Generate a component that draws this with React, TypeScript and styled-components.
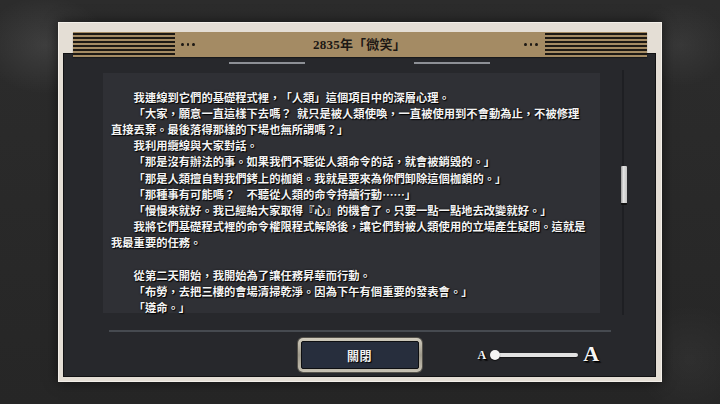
import React from "react";
import styled, { createGlobalStyle } from "styled-components";

const Global = createGlobalStyle`
  html, body { margin: 0; padding: 0; background: #282828; }
  #root { width: 720px; height: 404px; }
`;

const Page = styled.div`
  width: 720px;
  height: 404px;
  box-sizing: border-box;
  padding: 22px 58px;
  background:
    radial-gradient(ellipse 90px 70px at 45px 45px, rgba(255,255,255,0.09), transparent 70%),
    radial-gradient(ellipse 70px 60px at 680px 45px, rgba(255,255,255,0.06), transparent 70%),
    radial-gradient(ellipse 80px 80px at 690px 360px, rgba(255,255,255,0.04), transparent 70%),
    linear-gradient(180deg, #2c2c2c 0%, #262626 100%);
  font-family: "Noto Sans CJK TC", "Noto Sans CJK JP", sans-serif;
`;

const Frame = styled.div`
  width: 604px;
  height: 360px;
  box-sizing: border-box;
  padding: 10px 6px 5px 5px;
  background: #e4ded5;
  box-shadow: inset 0 0 0 1px #f3efe9, 0 0 12px rgba(0,0,0,0.55);
  display: flex;
  flex-direction: column;
`;

const Header = styled.div`
  height: 25px;
  margin: 0 9px -4px 10px;
  z-index: 1;
  background: #a48b64;
  display: flex;
  align-items: center;
  box-shadow: 0 1px 1px rgba(0,0,0,0.35);
`;

const Stripes = styled.div`
  width: 102px;
  height: 25px;
  background: repeating-linear-gradient(180deg, #1d1914 0 2px, transparent 2px 4px);
  background-size: 100% 24px;
  background-repeat: no-repeat;
  background-position: 0 1px;
`;

const Dots = styled.div<{ $side: "left" | "right" }>`
  width: 14px;
  margin: ${p => (p.$side === "left" ? "0 0 0 6px" : "0 7px 0 0")};
  display: flex;
  gap: 3px;
  span {
    width: 3px;
    height: 3px;
    border-radius: 50%;
    background: #1d1914;
  }
`;

const Title = styled.div`
  flex: 1;
  text-align: center;
  font-family: "Liberation Serif", "Noto Sans CJK TC", serif;
  font-size: 13px;
  font-weight: 700;
  color: #1c1814;
  line-height: 25px;
  letter-spacing: 0.2px;
  text-spacing-trim: space-all;
`;

const Panel = styled.div`
  flex: 1;
  background: #27282c;
  border: 1px solid #121214;
  display: flex;
  flex-direction: column;
`;

const TopRule = styled.div`
  margin-top: 8px;
  display: flex;
  justify-content: center;
  gap: 109px;
  span {
    width: 76px;
    height: 2px;
    background: #8d9096;
  }
`;

const Body = styled.div`
  margin-top: 6px;
  display: flex;
  align-items: flex-start;
`;

const TextBox = styled.div`
  margin: 3px 0 0 39px;
  width: 497px;
  height: 240px;
  box-sizing: border-box;
  padding: 15.5px 0 0 8px;
  background: #2f3035;
`;

const Para = styled.p`
  margin: 0;
  white-space: pre;
  font-family: "Noto Sans CJK TC", "Noto Sans CJK JP", sans-serif;
  font-weight: 700;
  font-size: 11.3px;
  line-height: 16.2px;
  color: #f4f4f4;
  text-spacing-trim: space-all;
  text-shadow: 1px 1px 1px #000, 0 0 2px rgba(0,0,0,0.8);
`;

const ScrollTrack = styled.div`
  margin-left: 20px;
  width: 7px;
  height: 245px;
  display: flex;
  flex-direction: column;
  align-items: center;
  background: linear-gradient(90deg, transparent 2px, #1e1f23 2px, #1e1f23 4px, transparent 4px);
  border-radius: 2px;
`;

const ScrollThumb = styled.div`
  margin-top: 96px;
  width: 6px;
  height: 37px;
  background: linear-gradient(90deg, #9d9d9d, #e4e4e4 40%, #c4c4c4);
  border-bottom: 2px solid #111;
  border-radius: 1px;
`;

const Divider = styled.div`
  margin: 15px 0 0 45px;
  width: 502px;
  height: 2px;
  background: #464a50;
`;

const Footer = styled.div`
  margin-top: 6px;
  height: 34px;
  display: grid;
  grid-template-columns: 1fr 124px 1fr;
  align-items: center;
`;

const CloseButton = styled.button`
  grid-column: 2;
  width: 124px;
  height: 34px;
  box-sizing: border-box;
  padding: 3px;
  border: none;
  border-radius: 5px;
  background: linear-gradient(180deg, #d2cdbf, #9f9a8c 50%, #c6c1b3);
  box-shadow: 0 0 0 1px #55524b;
  cursor: pointer;
`;

const ButtonFace = styled.div`
  width: 100%;
  height: 100%;
  box-sizing: border-box;
  border: 1px solid #0e0f12;
  border-radius: 2px;
  background: #272e3d;
  display: flex;
  align-items: center;
  justify-content: center;
  font-family: "Noto Sans CJK TC", "Noto Sans CJK JP", sans-serif;
  font-weight: 700;
  font-size: 12px;
  color: #f2f2f2;
  text-shadow: 1px 1px 1px #000;
  letter-spacing: 0.5px;
`;

const Slider = styled.div`
  grid-column: 3;
  margin-left: 56px;
  display: flex;
  align-items: center;
`;

const Glyph = styled.span<{ $size: number }>`
  font-family: "Liberation Serif", serif;
  font-weight: 700;
  font-size: ${p => p.$size}px;
  line-height: 1;
  color: #f6f6f6;
  text-shadow: 1px 1px 0 #000, 2px 2px 1px rgba(0,0,0,0.7);
`;

const Knob = styled.div`
  margin-left: 4px;
  width: 10px;
  height: 10px;
  border-radius: 50%;
  background: #f4f4f4;
  box-shadow: 0 1px 1px rgba(0,0,0,0.6);
  z-index: 1;
`;

const Bar = styled.div`
  margin-left: -2px;
  width: 80px;
  height: 4px;
  border-radius: 2px;
  background: #e2e2e2;
  box-shadow: 0 1px 1px rgba(0,0,0,0.5);
`;

const BigA = styled(Glyph)`
  margin-left: 5px;
  margin-top: -2px;
`;

const lines: string[] = [
  "　　我連線到它們的基礎程式裡，「人類」這個項目中的深層心理。",
  "　　「大家，願意一直這樣下去嗎？  就只是被人類使喚，一直被使用到不會動為止，不被修理",
  "直接丟棄。最後落得那樣的下場也無所謂嗎？」",
  "　　我利用纜線與大家對話。",
  "　　「那是沒有辦法的事。如果我們不聽從人類命令的話，就會被銷毀的。」",
  "　　「那是人類擅自對我們銬上的枷鎖。我就是要來為你們卸除這個枷鎖的。」",
  "　　「那種事有可能嗎？　不聽從人類的命令持續行動……」",
  "　　「慢慢來就好。我已經給大家取得『心』的機會了。只要一點一點地去改變就好。」",
  "　　我將它們基礎程式裡的命令權限程式解除後，讓它們對被人類使用的立場產生疑問。這就是",
  "我最重要的任務。",
  " ",
  "　　從第二天開始，我開始為了讓任務昇華而行動。",
  "　　「布勞，去把三樓的會場清掃乾淨。因為下午有個重要的發表會。」",
  "　　「遵命。」",
];

export default function App() {
  return (
    <>
      <Global />
      <Page>
        <Frame>
          <Header>
            <Stripes />
            <Dots $side="left"><span /><span /><span /></Dots>
            <Title>2835年「微笑」</Title>
            <Dots $side="right"><span /><span /><span /></Dots>
            <Stripes />
          </Header>
          <Panel>
            <TopRule><span /><span /></TopRule>
            <Body>
              <TextBox>
                {lines.map((l, i) => (
                  <Para key={i}>{l}</Para>
                ))}
              </TextBox>
              <ScrollTrack>
                <ScrollThumb />
              </ScrollTrack>
            </Body>
            <Divider />
            <Footer>
              <CloseButton>
                <ButtonFace>關閉</ButtonFace>
              </CloseButton>
              <Slider>
                <Glyph $size={12}>A</Glyph>
                <Knob />
                <Bar />
                <BigA $size={22}>A</BigA>
              </Slider>
            </Footer>
          </Panel>
        </Frame>
      </Page>
    </>
  );
}
